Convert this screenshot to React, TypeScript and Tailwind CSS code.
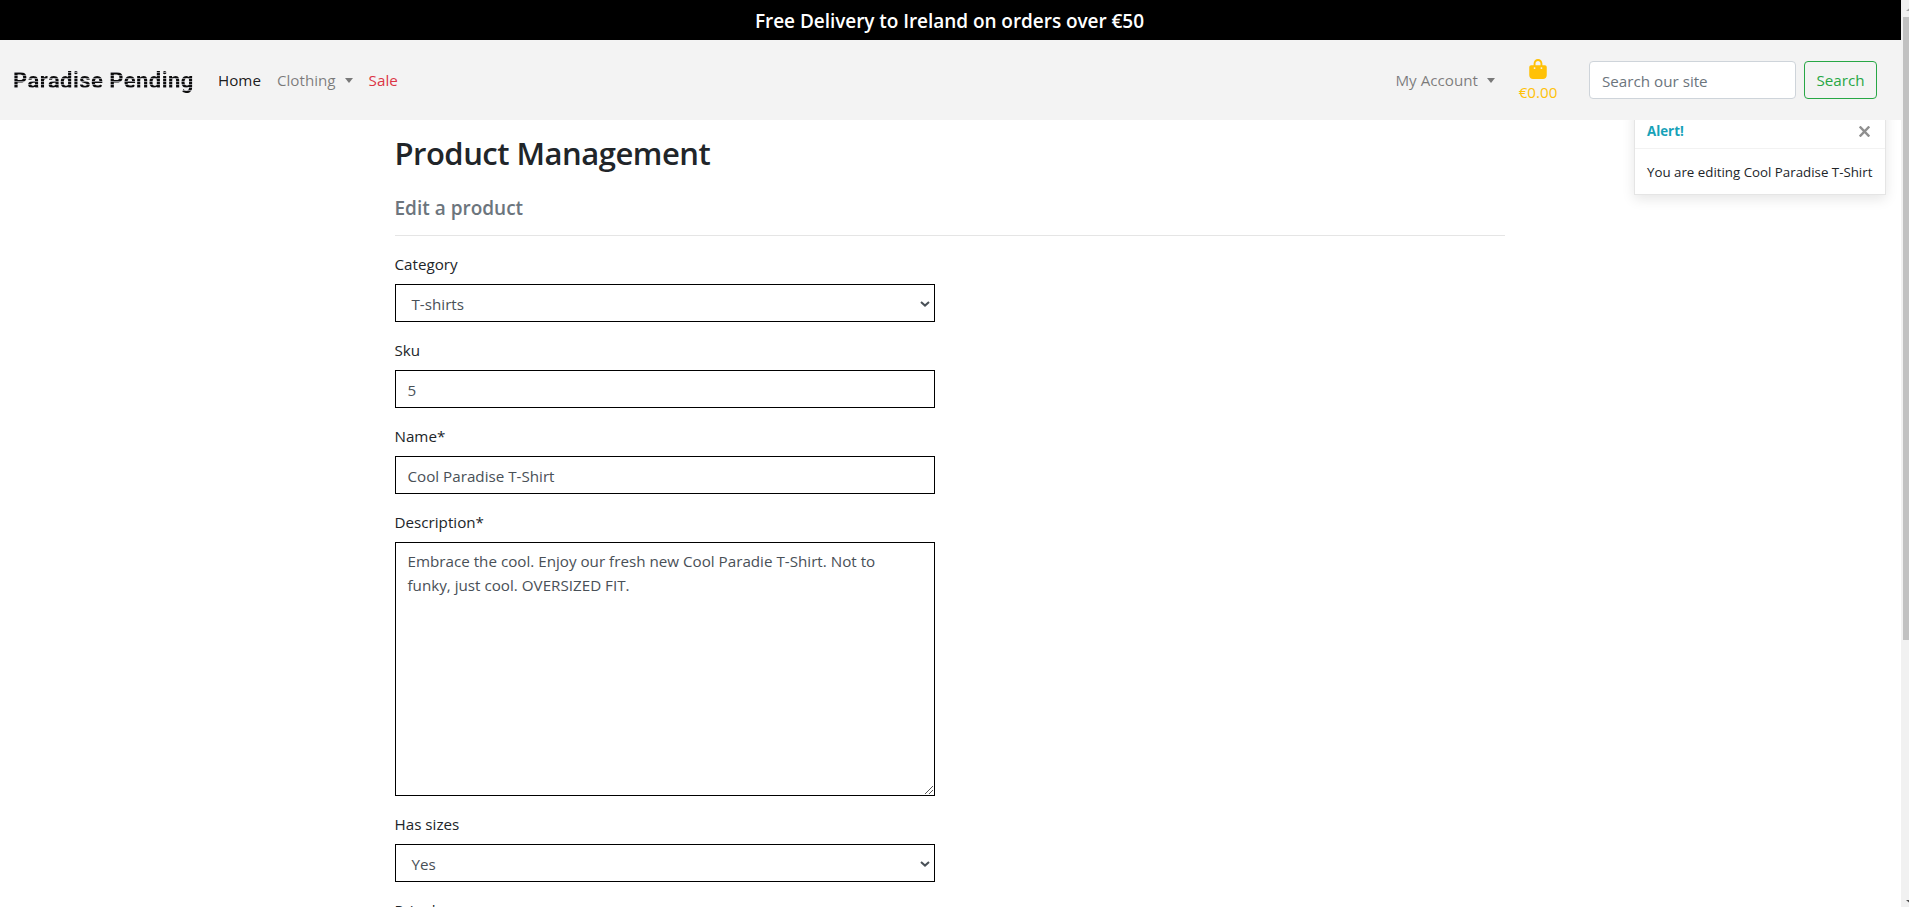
import React from "react";

const caret = "ml-[9px] mt-[2px] inline-block border-x-[4.5px] border-t-[5px] border-x-transparent border-t-current";
const box = "w-full border border-black bg-white text-[#495057]";

function Chevron() {
  return (
    <svg className="mt-px h-[6px] w-[10px]" viewBox="0 0 10 6" fill="none" stroke="#495057" strokeWidth="2">
      <path d="M1 1l4 3.6L9 1" />
    </svg>
  );
}

function Field({ label, children }: { label: string; children?: React.ReactNode }) {
  return (
    <div className="mb-4">
      <label className="mb-2 block h-6 text-[15.2px] leading-6">{label}</label>
      {children}
    </div>
  );
}

function Select({ value }: { value: string }) {
  return (
    <div className={box + " flex h-[38px] items-center justify-between pl-4 pr-1"}>
      <span className="pt-[3px] text-[15.2px]">{value}</span>
      <Chevron />
    </div>
  );
}

function Input({ value }: { value: string }) {
  return (
    <div className={box + " flex h-[38px] items-center px-3 pt-[3px] text-[15.2px]"}>{value}</div>
  );
}

export default function App() {
  return (
    <div className="flex h-[907px] w-full overflow-hidden bg-white font-['Open_Sans',sans-serif] text-[#212529]">
      <div className="relative min-w-0 flex-1">
        <div className="flex h-10 items-center justify-center bg-black pr-[2px] pt-[2px] text-[19px] font-semibold tracking-[-0.05px] text-white">
          <span>Free Delivery to Ireland on orders over €50</span>
        </div>
        <header className="relative z-10 flex h-20 items-center bg-[#f3f3f3] pl-[13px] pr-6 text-[15.2px]">
          <span className="w-[181px] whitespace-nowrap bg-[repeating-linear-gradient(180deg,#0c0c0c_0px,#0c0c0c_2px,#8a8a90_2px,#8a8a90_3px)] bg-clip-text font-['Roboto',sans-serif] text-[22px] font-bold tracking-[0.45px] text-transparent">
            Paradise Pending
          </span>
          <nav className="ml-6 flex items-center gap-4">
            <a className="text-black/90">Home</a>
            <a className="flex items-center text-black/50">Clothing<i className={caret} /></a>
            <a className="text-[#dc3545]">Sale</a>
          </nav>
          <div className="ml-auto flex items-center">
            <a className="flex items-center text-black/50">My Account<i className={caret} /></a>
            <div className="ml-6 flex w-[38px] flex-col items-center text-[#ffc107]">
              <svg className="mb-px mt-[2px] h-5 w-[18px]" viewBox="0 0 448 512" fill="currentColor">
                <path d="M160 112c0-35.300 28.700-64 64-64s64 28.700 64 64v48H160V112zm-48 48H48c-26.500 0-48 21.500-48 48V416c0 53 43 96 96 96H352c53 0 96-43 96-96V208c0-26.500-21.500-48-48-48H336V112C336 50.100 285.900 0 224 0S112 50.100 112 112v48zm24 48a24 24 0 1 1 0 48 24 24 0 1 1 0-48zm152 24a24 24 0 1 1 48 0 24 24 0 1 1-48 0z" />
              </svg>
              <span className="leading-6">€0.00</span>
            </div>
            <div className="ml-8 flex h-[38px] w-[207px] items-center rounded border border-[#ced4da] bg-white px-3 pt-[3px] text-[#6c757d]">Search our site</div>
            <button className="ml-2 flex h-[38px] w-[73px] items-center justify-center rounded border border-[#28a745] text-[#28a745]">Search</button>
          </div>
        </header>

        <div className="absolute right-[15px] top-[105px] w-[252px] border border-black/10 bg-white shadow-[0_4px_12px_rgba(0,0,0,0.1)]">
          <div className="flex h-[43px] items-center justify-between border-b border-black/5 pl-3 pr-[15px] pt-[9px]">
            <strong className="text-[13.3px] font-bold text-[#17a2b8]">Alert!</strong>
            <svg className="h-[11px] w-[11px]" viewBox="0 0 11 11" stroke="#8f8f8f" strokeWidth="2.4">
              <path d="M.7 .5l9.600 10M10.300 .5l-9.600 10" />
            </svg>
          </div>
          <div className="flex h-[45px] items-center px-3 pt-[2px] text-[13.3px]"><span className="whitespace-nowrap">You are editing Cool Paradise T-Shirt</span></div>
        </div>

        <div className="pr-[2px]">
          <main className="mx-auto w-[1110px] pt-[14px]">
            <h2 className="h-[38px] text-[31px] font-semibold leading-[38px] tracking-[-0.5px]"><span>Product Management</span></h2>
            <h5 className="mt-6 h-6 text-[19px] font-semibold leading-6 text-[#6c757d]"><span>Edit a product</span></h5>
            <hr className="mb-4 mt-[15px] border-black/10" />
            <form className="w-[540px]">
              <Field label="Category"><Select value="T-shirts" /></Field>
              <Field label="Sku"><Input value="5" /></Field>
              <Field label="Name*"><Input value="Cool Paradise T-Shirt" /></Field>
              <Field label="Description*">
                <div className={box + " relative h-[254px] px-3 py-[6px] text-[15.2px] leading-6"}>
                  Embrace the cool. Enjoy our fresh new Cool Paradie T-Shirt. Not to<br />funky, just cool. OVERSIZED FIT.
                  <svg className="absolute bottom-px right-px h-[8px] w-[8px]" viewBox="0 0 8 8" stroke="#555" strokeWidth="1">
                    <path d="M0 8L8 0M4 8l4-4" />
                  </svg>
                </div>
              </Field>
              <Field label="Has sizes"><Select value="Yes" /></Field>
              <Field label="Price*" />
            </form>
          </main>
        </div>
      </div>
      <div className="flex w-2 flex-col justify-between overflow-hidden bg-[#f1f1f1]">
        <div>
          <svg className="ml-[5px] mt-[8px] block h-[3px] w-[7px]" viewBox="0 0 7 3" fill="#a3a3a3"><path d="M0 3l3.500-3L7 3z" /></svg>
          <div className="ml-[2px] mt-[6px] h-[623px] w-[15px] bg-[#c1c1c1]" />
        </div>
        <svg className="mb-1 ml-[5px] block h-[3px] w-[7px]" viewBox="0 0 7 3" fill="#505050"><path d="M0 0l3.500 3L7 0z" /></svg>
      </div>
    </div>
  );
}
